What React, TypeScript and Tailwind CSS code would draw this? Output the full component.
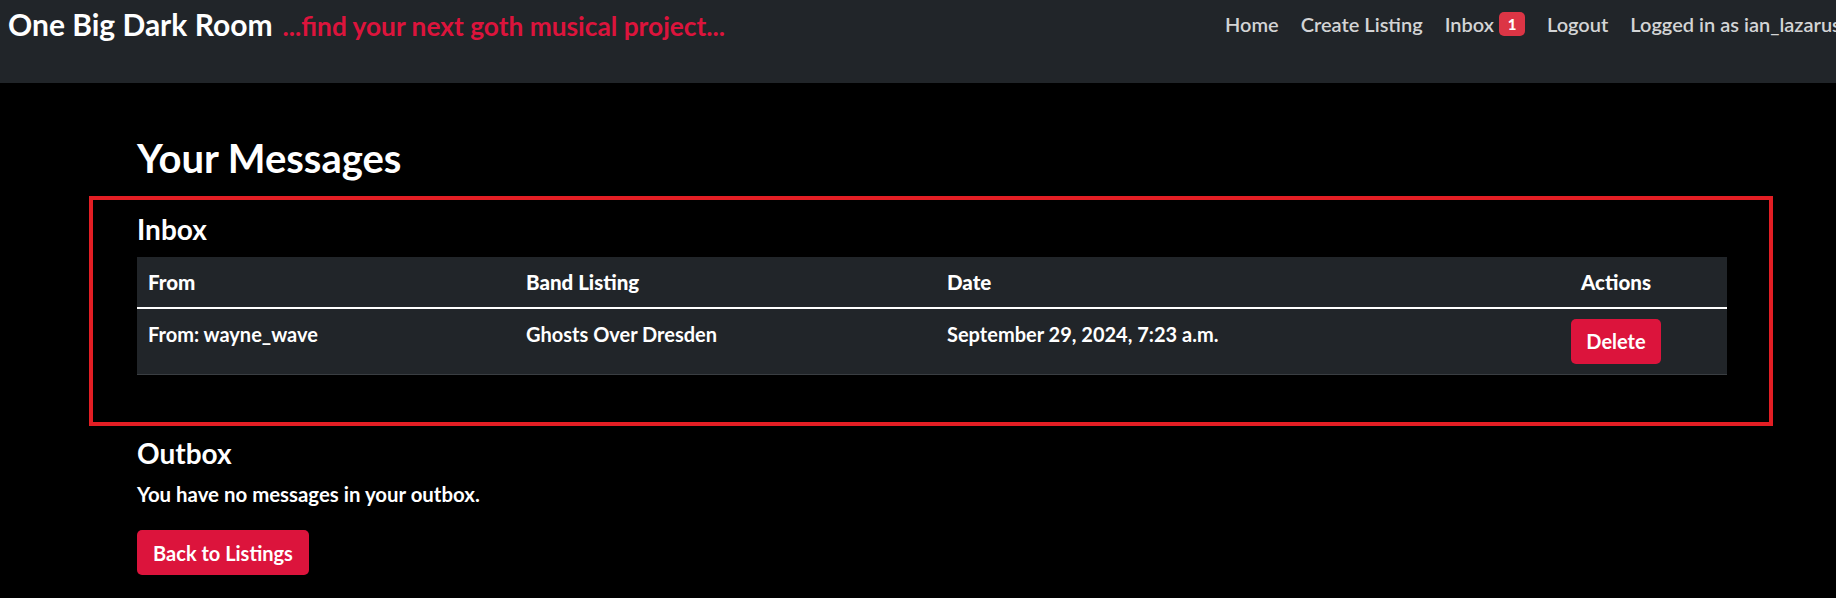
import React from 'react';

const NAV_LINKS = ['Home', 'Create Listing'];

const INBOX = [
  { id: 1, from: 'wayne_wave', listing: 'Ghosts Over Dresden', date: 'September 29, 2024, 7:23 a.m.' },
];

function Navbar() {
  return (
    <nav className="h-[83px] bg-[#212529] flex items-start whitespace-nowrap">
      {/* brand */}
      <div className="w-[1225px] shrink-0 pl-[8px] pt-[6px] flex items-baseline leading-[1.2]">
        <span className="text-[30px] font-bold text-white">One Big Dark Room</span>
        <span className="ml-[10px] text-[26.3px] font-bold text-[#dc143c]">...find your next goth musical project...</span>
      </div>

      {/* links */}
      <div className="shrink-0 pt-[12px] flex items-center gap-[22px] text-[20px] leading-[24px] font-semibold text-[#d3d4d5]">
        {NAV_LINKS.map(l => (
          <a key={l} href="#">{l}</a>
        ))}
        <a href="#" className="flex items-center">
          Inbox
          <span className="ml-[5px] w-[26px] h-[24px] rounded-[5px] bg-[#dc3545] text-white text-[15px] font-black flex items-center justify-center">1</span>
        </a>
        <a href="#">Logout</a>
        <span>Logged in as ian_lazarus</span>
      </div>
    </nav>
  );
}

function InboxTable() {
  return (
    <table className="w-full border-collapse bg-[#212529] text-white text-left">
      <thead>
        <tr className="border-b-2 border-white">
          <th className="w-[379px] h-[50px] px-[11px] py-[10px] text-[20.5px] leading-[30px] font-black">From</th>
          <th className="w-[421px] px-[10px] py-[10px] text-[20.5px] leading-[30px] font-black">Band Listing</th>
          <th className="w-[568px] px-[10px] py-[10px] text-[20.5px] leading-[30px] font-black">Date</th>
          <th className="px-[10px] py-[10px] text-[20.5px] leading-[30px] font-black text-center">Actions</th>
        </tr>
      </thead>
      <tbody>
        {INBOX.map(m => (
          <tr key={m.id} className="border-b border-[#3a3e42] align-top">
            <td className="px-[11px] py-[10px] text-[20px] leading-[30px] font-bold">From: {m.from}</td>
            <td className="px-[10px] py-[10px] text-[20px] leading-[30px] font-bold">{m.listing}</td>
            <td className="px-[10px] py-[10px] text-[20px] leading-[30px] font-bold">{m.date}</td>
            <td className="px-[10px] py-[10px] text-center">
              <button className="h-[45px] px-[15px] rounded-[5px] bg-[#dc143c] text-white text-[20px] leading-[30px] font-bold">
                Delete
              </button>
            </td>
          </tr>
        ))}
      </tbody>
    </table>
  );
}

export default function App() {
  return (
    <div className="min-h-screen bg-black text-white overflow-hidden font-['Lato','Noto_Sans',sans-serif]">
      <Navbar />

      <main className="ml-[137px] w-[1590px]">
        <h2 className="mt-[51px] text-[40px] leading-[1.2] font-bold">Your Messages</h2>

        {/* highlighted inbox section */}
        <section className="mt-[14px] ml-[-48px] mr-[-46px] border-[4px] border-[#e31e24] pl-[44px] pr-[42px] pt-[13px] pb-[47px]">
          <h3 className="text-[28px] leading-[1.2] font-bold mb-[10px]">Inbox</h3>
          <InboxTable />
        </section>

        <h3 className="mt-[11px] text-[28px] leading-[1.2] font-bold">Outbox</h3>
        <p className="mt-[9px] text-[20.4px] leading-[30px] font-bold">You have no messages in your outbox.</p>
        <button className="mt-[21px] h-[45px] w-[172px] rounded-[5px] bg-[#dc143c] text-white text-[20px] leading-[30px] font-bold">
          Back to Listings
        </button>
      </main>
    </div>
  );
}
